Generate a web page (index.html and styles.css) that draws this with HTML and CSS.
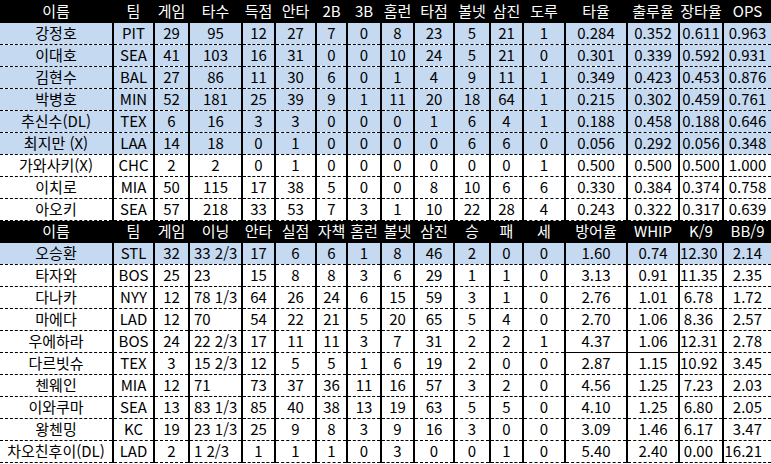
FILE: index.html
```html
<!DOCTYPE html>
<html lang="ko">
<head>
<meta charset="utf-8">
<title>MLB 한국·일본 선수 기록</title>
<link rel="stylesheet" href="styles.css">
</head>
<body>
<table class="sheet">
  <colgroup>
    <col class="w113"><col class="w41"><col class="w35"><col class="w53"><col class="w33"><col class="w41"><col class="w31"><col class="w34"><col class="w33"><col class="w40"><col class="w36"><col class="w33"><col class="w42"><col class="w62"><col class="w52"><col class="w44"><col class="w48">
  </colgroup>
  <tbody class="batters">
    <tr class="hd"><td>이름</td><td>팀</td><td>게임</td><td>타수</td><td>득점</td><td>안타</td><td>2B</td><td>3B</td><td>홈런</td><td>타점</td><td>볼넷</td><td>삼진</td><td>도루</td><td>타율</td><td>출루율</td><td>장타율</td><td>OPS</td></tr>
    <tr class="hl"><td>강정호</td><td>PIT</td><td>29</td><td>95</td><td>12</td><td>27</td><td>7</td><td>0</td><td>8</td><td>23</td><td>5</td><td>21</td><td>1</td><td>0.284</td><td>0.352</td><td>0.611</td><td>0.963</td></tr>
    <tr class="hl"><td>이대호</td><td>SEA</td><td>41</td><td>103</td><td>16</td><td>31</td><td>0</td><td>0</td><td>10</td><td>24</td><td>5</td><td>21</td><td>0</td><td>0.301</td><td>0.339</td><td>0.592</td><td>0.931</td></tr>
    <tr class="hl"><td>김현수</td><td>BAL</td><td>27</td><td>86</td><td>11</td><td>30</td><td>6</td><td>0</td><td>1</td><td>4</td><td>9</td><td>11</td><td>1</td><td>0.349</td><td>0.423</td><td>0.453</td><td>0.876</td></tr>
    <tr class="hl"><td>박병호</td><td>MIN</td><td>52</td><td>181</td><td>25</td><td>39</td><td>9</td><td>1</td><td>11</td><td>20</td><td>18</td><td>64</td><td>1</td><td>0.215</td><td>0.302</td><td>0.459</td><td>0.761</td></tr>
    <tr class="hl"><td>추신수(DL)</td><td>TEX</td><td>6</td><td>16</td><td>3</td><td>3</td><td>0</td><td>0</td><td>0</td><td>1</td><td>6</td><td>4</td><td>1</td><td>0.188</td><td>0.458</td><td>0.188</td><td>0.646</td></tr>
    <tr class="hl"><td>최지만 (X)</td><td>LAA</td><td>14</td><td>18</td><td>0</td><td>1</td><td>0</td><td>0</td><td>0</td><td>0</td><td>6</td><td>6</td><td>0</td><td>0.056</td><td>0.292</td><td>0.056</td><td>0.348</td></tr>
    <tr><td>가와사키(X)</td><td>CHC</td><td>2</td><td>2</td><td>0</td><td>1</td><td>0</td><td>0</td><td>0</td><td>0</td><td>0</td><td>0</td><td>1</td><td>0.500</td><td>0.500</td><td>0.500</td><td>1.000</td></tr>
    <tr><td>이치로</td><td>MIA</td><td>50</td><td>115</td><td>17</td><td>38</td><td>5</td><td>0</td><td>0</td><td>8</td><td>10</td><td>6</td><td>6</td><td>0.330</td><td>0.384</td><td>0.374</td><td>0.758</td></tr>
    <tr><td>아오키</td><td>SEA</td><td>57</td><td>218</td><td>33</td><td>53</td><td>7</td><td>3</td><td>1</td><td>10</td><td>22</td><td>28</td><td>4</td><td>0.243</td><td>0.322</td><td>0.317</td><td>0.639</td></tr>
  </tbody>
  <tbody class="pitchers">
    <tr class="hd"><td>이름</td><td>팀</td><td>게임</td><td>이닝</td><td>안타</td><td>실점</td><td>자책</td><td>홈런</td><td>볼넷</td><td>삼진</td><td>승</td><td>패</td><td>세</td><td>방어율</td><td>WHIP</td><td>K/9</td><td>BB/9</td></tr>
    <tr class="hl"><td>오승환</td><td>STL</td><td>32</td><td>33 2/3</td><td>17</td><td>6</td><td>6</td><td>1</td><td>8</td><td>46</td><td>2</td><td>0</td><td>0</td><td>1.60</td><td>0.74</td><td>12.30</td><td>2.14</td></tr>
    <tr><td>타자와</td><td>BOS</td><td>25</td><td>23</td><td>15</td><td>8</td><td>8</td><td>3</td><td>6</td><td>29</td><td>1</td><td>1</td><td>0</td><td>3.13</td><td>0.91</td><td>11.35</td><td>2.35</td></tr>
    <tr><td>다나카</td><td>NYY</td><td>12</td><td>78 1/3</td><td>64</td><td>26</td><td>24</td><td>6</td><td>15</td><td>59</td><td>3</td><td>1</td><td>0</td><td>2.76</td><td>1.01</td><td>6.78</td><td>1.72</td></tr>
    <tr><td>마에다</td><td>LAD</td><td>12</td><td>70</td><td>54</td><td>22</td><td>21</td><td>5</td><td>20</td><td>65</td><td>5</td><td>4</td><td>0</td><td>2.70</td><td>1.06</td><td>8.36</td><td>2.57</td></tr>
    <tr><td>우에하라</td><td>BOS</td><td>24</td><td>22 2/3</td><td>17</td><td>11</td><td>11</td><td>3</td><td>7</td><td>31</td><td>2</td><td>2</td><td>1</td><td class="solid">4.37</td><td class="solid">1.06</td><td>12.31</td><td>2.78</td></tr>
    <tr><td>다르빗슈</td><td>TEX</td><td>3</td><td>15 2/3</td><td>12</td><td>5</td><td>5</td><td>1</td><td>6</td><td>19</td><td>2</td><td>0</td><td>0</td><td>2.87</td><td>1.15</td><td>10.92</td><td>3.45</td></tr>
    <tr><td>첸웨인</td><td>MIA</td><td>12</td><td>71</td><td>73</td><td>37</td><td>36</td><td>11</td><td>16</td><td>57</td><td>3</td><td>2</td><td>0</td><td>4.56</td><td>1.25</td><td>7.23</td><td>2.03</td></tr>
    <tr><td>이와쿠마</td><td>SEA</td><td>13</td><td>83 1/3</td><td>85</td><td>40</td><td>38</td><td>13</td><td>19</td><td>63</td><td>5</td><td>5</td><td>0</td><td>4.10</td><td>1.25</td><td>6.80</td><td>2.05</td></tr>
    <tr><td>왕첸밍</td><td>KC</td><td>19</td><td>23 1/3</td><td>25</td><td>9</td><td>8</td><td>3</td><td>9</td><td>16</td><td>3</td><td>0</td><td>0</td><td>3.09</td><td>1.46</td><td>6.17</td><td>3.47</td></tr>
    <tr><td>차오친후이(DL)</td><td>LAD</td><td>2</td><td>1 2/3</td><td>1</td><td>1</td><td>1</td><td>0</td><td>3</td><td>0</td><td>0</td><td>1</td><td>0</td><td>5.40</td><td>2.40</td><td>0.00</td><td>16.21</td></tr>
  </tbody>
</table>
</body>
</html>
```

FILE: styles.css
```css
html, body {
  margin: 0;
  padding: 0;
  background: #ffffff;
}

.sheet {
  border-collapse: collapse;
  table-layout: fixed;
  width: 771px;
  font-family: "Noto Sans CJK KR", "Noto Sans", sans-serif;
  font-size: 15px;
  color: #000;
}

.w113 { width: 113px; }
.w62 { width: 62px; }
.w53 { width: 53px; }
.w52 { width: 52px; }
.w48 { width: 48px; }
.w44 { width: 44px; }
.w42 { width: 42px; }
.w41 { width: 41px; }
.w40 { width: 40px; }
.w36 { width: 36px; }
.w35 { width: 35px; }
.w34 { width: 34px; }
.w33 { width: 33px; }
.w31 { width: 31px; }

.sheet tr {
  height: 22px;
}

.sheet td {
  padding: 0;
  height: 21px;
  line-height: 20px;
  text-align: center;
  white-space: nowrap;
  overflow: hidden;
  border-left: 2px solid #000;
  border-bottom: 1px dashed #000;
}

.sheet td:first-child {
  border-left: none;
}

.sheet td.solid {
  border-bottom: 1px solid #000;
}

.sheet tr.hd td {
  background: #000;
  color: #fff;
  border-bottom: 1px solid #000;
}

.sheet tr.hl td {
  background: #c5d9f1;
}

/* pitcher table alignment quirks */
.pitchers tr:not(.hd) td:nth-child(4) {
  text-align: left;
  padding-left: 4px;
}

.pitchers tr:not(.hd) td:nth-child(16),
.pitchers tr:not(.hd) td:nth-child(17) {
  text-align: right;
  padding-right: 9px;
}
```
